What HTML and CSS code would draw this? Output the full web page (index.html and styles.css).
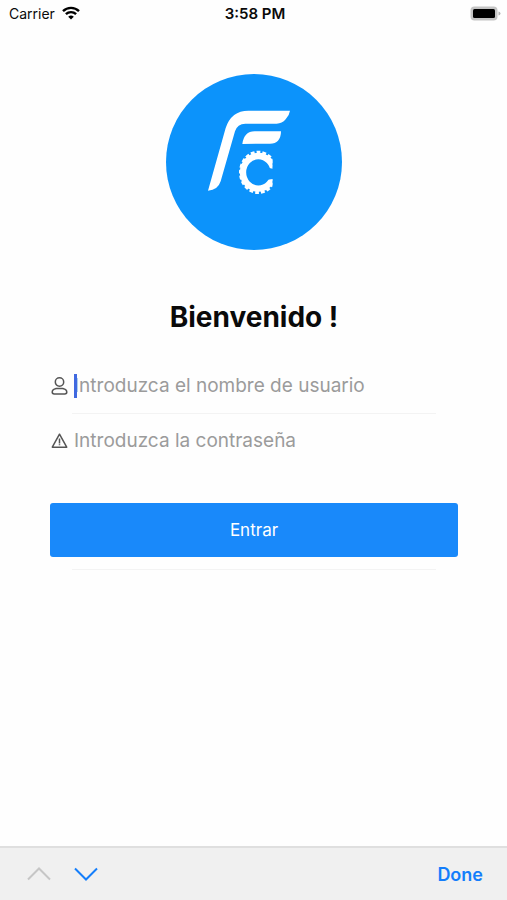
FILE: index.html
```html
<!DOCTYPE html>
<html lang="es">
<head>
  <meta charset="UTF-8">
  <meta name="viewport" content="width=device-width, initial-scale=1.0">
  <title>Bienvenido</title>
  <link rel="stylesheet" href="styles.css">
</head>
<body>
  <header class="status-bar">
    <div class="carrier">
      <span>Carrier</span>
      <svg class="wifi" viewBox="0 0 18 14" aria-hidden="true">
        <path d="M1 5.2a11.4 11.4 0 0 1 16 0" />
        <path d="M3.9 8.2a7.3 7.3 0 0 1 10.2 0" />
        <path class="wifi-dot" d="M9 13.6 6.2 10.8a4 4 0 0 1 5.6 0z" />
      </svg>
    </div>
    <div class="time">3:58 PM</div>
    <div class="battery">
      <svg viewBox="0 0 31 15" width="31" height="15" aria-hidden="true">
        <rect x="0.5" y="0.5" width="27" height="14" rx="4" fill="#c4c4c4" />
        <rect x="3" y="3" width="22" height="9" rx="1.5" fill="#000" />
        <path d="M28.5 5.5q2 .5 2 2t-2 2z" fill="#b4b4b4" />
      </svg>
    </div>
  </header>

  <main class="login">
    <svg class="logo" viewBox="0 0 528 528" role="img" aria-label="FC">
      <defs>
        <clipPath id="gear-cut">
          <path d="M100 140H200L218 172V206L198 202V240L218 237V258L200 300H100Z" />
        </clipPath>
      </defs>
      <circle cx="264" cy="264" r="264" fill="#0c93fb" />
      <g transform="translate(102 78)">
        <path fill="#fff" d="M24 272 77 84Q94 32 145 32H270Q268 46 257 58Q246 71 230 71H136Q112 71 105 94L62 244Q54 270 24 272Z" />
        <path fill="#fff" d="M127 132Q132 94 164 94H243Q243 112 234 122Q226 131 210 131Z" />
        <g clip-path="url(#gear-cut)">
          <ellipse class="gear" cx="175" cy="217" rx="46" ry="49" />
          <ellipse class="gear-teeth" cx="175" cy="217" rx="52" ry="59" />
        </g>
      </g>
    </svg>

    <h1>Bienvenido !</h1>

    <form class="login-form">
      <div class="field">
        <label for="user" aria-label="Usuario">
          <svg class="icon" viewBox="0 0 18 20" aria-hidden="true">
            <circle cx="9.500" cy="6" r="4.200" />
            <path d="M9.500 12.200c-4.600 0-7.300 1.500-7.300 3.900 0 1.200.8 1.900 2 1.900h10.600c1.200 0 2-.7 2-1.900 0-2.400-2.700-3.900-7.300-3.900z" />
          </svg>
        </label>
        <div class="input-wrap">
          <input type="text" id="user" placeholder="Introduzca el nombre de usuario">
          <span class="caret"></span>
        </div>
      </div>
      <hr class="divider">
      <div class="field">
        <label for="password" aria-label="Contraseña">
          <svg class="icon" viewBox="0 0 18 20" aria-hidden="true">
            <path d="M9.500 3.200 2.300 16.200h14.400z" />
            <path d="M9.500 7.500v5M9.500 13.300v1" />
          </svg>
        </label>
        <div class="input-wrap">
          <input type="password" id="password" placeholder="Introduzca la contraseña">
        </div>
      </div>
      <button type="button" class="submit">Entrar</button>
      <hr class="divider">
    </form>
  </main>

  <footer class="toolbar">
    <button type="button" class="arrow" aria-label="Anterior" disabled>
      <svg viewBox="0 0 24 14" aria-hidden="true"><path d="M1 12.500 12 1.500l11 11" /></svg>
    </button>
    <button type="button" class="arrow" aria-label="Siguiente">
      <svg viewBox="0 0 24 14" aria-hidden="true"><path d="M1 1.500l11 11 11-11" /></svg>
    </button>
    <button type="button" class="done">Done</button>
  </footer>
</body>
</html>
```

FILE: styles.css
```css
* {
  box-sizing: border-box;
}
body {
  font-family: Inter, "Liberation Sans", sans-serif;
  background-color: #fefefe;
  color: #0a0a0a;
  margin: 0;
  min-height: 100vh;
  display: flex;
  flex-direction: column;
}

/* Status bar */
.status-bar {
  display: grid;
  grid-template-columns: 1fr auto 1fr;
  align-items: center;
  height: 26px;
  padding: 0 6px 0 9px;
  font-size: 14px;
}
.carrier {
  display: flex;
  align-items: center;
  gap: 7px;
}
.wifi {
  width: 18px;
  height: 14px;
  fill: none;
  stroke: #000;
  stroke-width: 2.4;
}
.wifi .wifi-dot {
  fill: #000;
  stroke: none;
}
.time {
  font-size: 15px;
  font-weight: 600;
}
.battery {
  display: flex;
  justify-content: flex-end;
}

/* Login */
.login {
  flex: 1;
  display: flex;
  flex-direction: column;
  align-items: center;
  padding: 48px 49px 0 50px;
}
.logo {
  width: 176px;
  height: 176px;
}
.gear {
  fill: none;
  stroke: #fff;
  stroke-width: 19;
}
.gear-teeth {
  fill: none;
  stroke: #fff;
  stroke-width: 12;
  stroke-dasharray: 11 6;
}
h1 {
  margin: 49px 0 24px;
  font-size: 28px;
  line-height: 36px;
  font-weight: 700;
}
.login-form {
  width: 100%;
}
.field {
  display: flex;
  align-items: center;
  gap: 6px;
  height: 54px;
}
.field label {
  display: flex;
}
.icon {
  width: 18px;
  height: 20px;
  fill: none;
  stroke: #555;
  stroke-width: 1.5;
  stroke-linejoin: round;
}
.input-wrap {
  position: relative;
  flex: 1;
}
.input-wrap input {
  display: block;
  width: 100%;
  padding: 0;
  border: none;
  outline: none;
  background: none;
  font-family: inherit;
  font-size: 19px;
  line-height: 24px;
}
.input-wrap input::placeholder {
  color: #9b9b9b;
  opacity: 1;
}
.caret {
  position: absolute;
  top: 0;
  left: 0;
  width: 3px;
  height: 24px;
  background-color: #4069e0;
}
.divider {
  height: 1px;
  margin: 0 22px;
  border: none;
  background-color: #f3f3f3;
}
.submit {
  display: block;
  width: 100%;
  height: 54px;
  margin: 35px 0 12px;
  border: none;
  border-radius: 3px;
  background-color: #1989fa;
  color: #fff;
  font-family: inherit;
  font-size: 17px;
}

/* Keyboard toolbar */
.toolbar {
  display: flex;
  align-items: center;
  gap: 23px;
  height: 54px;
  padding: 0 24px 0 27px;
  border-top: 2px solid #dfdfdf;
  background-color: #f0f0f0;
}
.toolbar button {
  padding: 0;
  border: none;
  background: none;
  color: #147efb;
}
.arrow svg {
  display: block;
  width: 24px;
  height: 14px;
  fill: none;
  stroke: currentColor;
  stroke-width: 2;
}
.toolbar .arrow:disabled {
  color: #c6c6c6;
}
.toolbar .done {
  margin-left: auto;
  font-family: inherit;
  font-size: 18px;
  font-weight: 600;
}
```
